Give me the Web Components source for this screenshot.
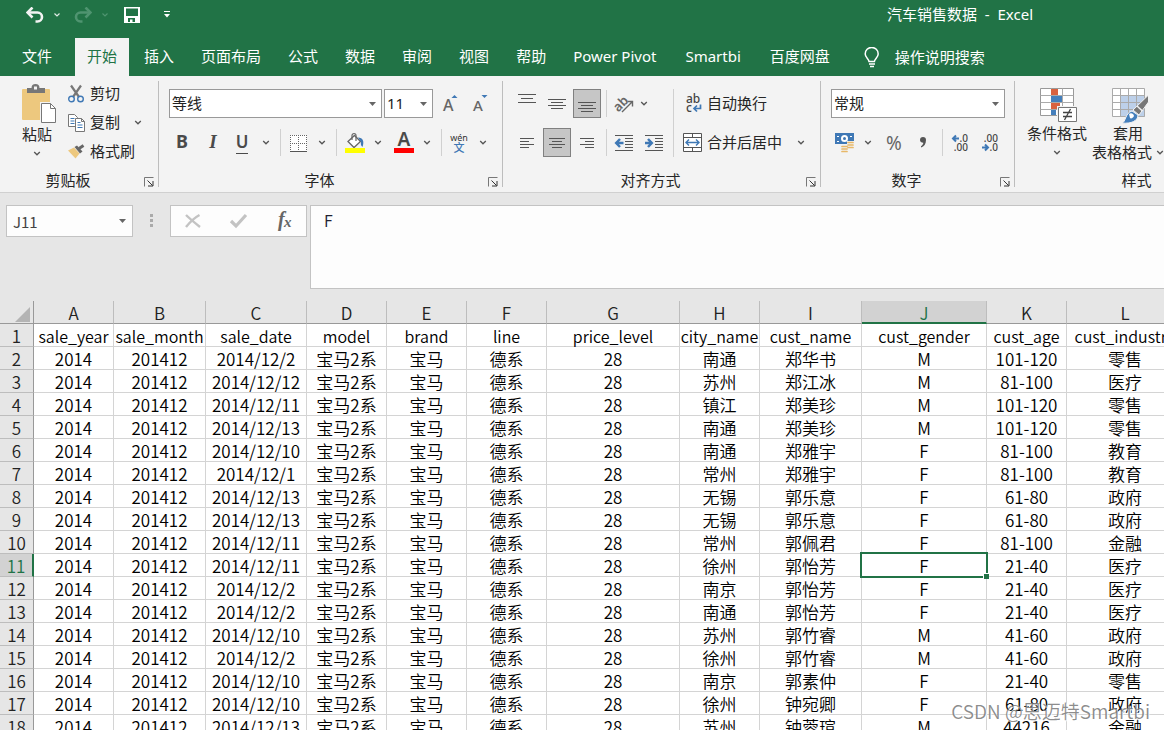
<!DOCTYPE html>
<html lang="zh-CN">
<head>
<meta charset="utf-8">
<title>汽车销售数据 - Excel</title>
<style>
  html, body { margin: 0; height: 100%; overflow: hidden; }
  body { font: 15px/20px "Noto Sans", "Noto Sans CJK SC", sans-serif; color: #262626; }
</style>
</head>
<body>
<excel-app></excel-app>
<script>
const ICONS = {
  undo: [18, 16, '<path d="M2 5.500H11.500a4.500 4.500 0 0 1 0 9H9.500" fill="none" stroke="#f3f3f3" stroke-width="2.600"/><path d="M6.500 0.500 1.500 5.500l5 5" fill="none" stroke="#f3f3f3" stroke-width="2.600"/>'],
  redo: [18, 16, '<path d="M16 5.500H6.500a4.500 4.500 0 0 0 0 9H8.500" fill="none" stroke="#4f9470" stroke-width="2.600"/><path d="M11.500 0.500l5 5-5 5" fill="none" stroke="#4f9470" stroke-width="2.600"/>'],
  save: [16, 16, '<path fill="#fff" fill-rule="evenodd" d="M0 0h16v16H0zM2 1.500v7.500h12V1.500zM4 11v4h2v-2.500h2.500V15H11v-4z"/>'],
  more: [6, 7, '<path d="M0 0.500h6" stroke="#fff"/><path d="M0 3h6L3 6.500z" fill="#fff"/>'],
  chevW: [6, 4, '<path d="M0.500 0.500 3 3 5.500 0.500" fill="none" stroke="#dfeae4" stroke-width="1.200"/>'],
  chevG: [6, 4, '<path d="M0.500 0.500 3 3 5.500 0.500" fill="none" stroke="#4f9470" stroke-width="1.200"/>'],
  chev: [8, 5, '<path d="M1.200 1 4 3.800 6.800 1" fill="none" stroke="#555" stroke-width="1.300"/>'],
  bulb: [16, 21, '<path d="M5 14.500c0-2.500-3.800-4-3.800-7.600a6.500 6.500 0 0 1 13 0c0 3.600-3.800 5.100-3.800 7.600z" fill="none" stroke="#fff" stroke-width="1.500"/><path d="M5 17h6M6 19.500h4" stroke="#fff" stroke-width="1.500"/>'],
  paste: [38, 38, '<g transform="translate(4)"><rect y="4" width="28" height="31" rx="1" fill="#edc87e"/><path d="M5 3h4.500a4 4 0 0 1 8 0H23v5H5z" fill="#777"/><rect x="12" y="1.500" width="3" height="3" fill="#f3f3f3"/><path d="M19.500 18.500h9l5 5v14h-14z" fill="#fff" stroke="#f3f3f3" stroke-width="3"/><path d="M19.500 18.500h9l5 5v14h-14z" fill="#fff" stroke="#777"/><path d="M28.500 18.500v5h5" fill="none" stroke="#777"/></g>'],
  cut: [16, 18, '<path d="M3 0.500 11 12M13 0.500 5 12" stroke="#777" stroke-width="2.200"/><circle cx="3.500" cy="14" r="2.800" fill="none" stroke="#3f78b5" stroke-width="1.400"/><circle cx="12.500" cy="14" r="2.800" fill="none" stroke="#3f78b5" stroke-width="1.400"/>'],
  copy: [17, 18, '<path d="M0.500 0.500h6l3 3v9h-9z" fill="#fff" stroke="#777"/><path d="M2.500 4.500h4M2.500 7h4M2.500 9.500h4" stroke="#3f78b5"/><path d="M7.500 4.500h6l3 3v10h-9z" fill="#fff" stroke="#777"/><path d="M13.500 4.500v3h3" fill="none" stroke="#777"/><path d="M9.500 8.500h3M9.500 11h5M9.500 13.500h5" stroke="#3f78b5"/>'],
  brush: [17, 15, '<path d="M0 6.500 6 3.500l5.500 6L7.500 14.500z" fill="#edc87e"/><path d="M6.500 3 9 1.500l5.500 6-2.500 2z" fill="#666"/><path d="M11 4.500 15.500 1.500" stroke="#666" stroke-width="3"/>'],
  launch: [10, 10, '<path d="M0.500 9.500v-9h9" fill="none" stroke="#777"/><path d="M3.500 3.500 8.500 8.500M9 4v5H4" fill="none" stroke="#333"/>'],
  tri: [7, 4, '<path d="M0 0h7L3.500 4z" fill="#666"/>'],
  grow: [16, 18, '<text x="0" y="16" font-family="Noto Sans" font-size="16" font-weight="500" fill="#666">A</text><path d="M8.500 3 11.500 0 14.500 3z" fill="#3f78b5"/>'],
  shrink: [16, 18, '<text x="0" y="16" font-family="Noto Sans" font-size="15" font-weight="500" fill="#666">A</text><path d="M8.500 0 11.500 3 14.500 0z" fill="#3f78b5"/>'],
  border: [17, 18, '<path d="M0 1h17v16H0z" fill="#fff"/><path d="M0 1.500h17M0 9.500h17M0.500 1v16M8.500 1v16M16.500 1v16" stroke="#666" stroke-dasharray="1 1" fill="none"/><path d="M0 17.500h17" stroke="#555"/>'],
  fill: [20, 20, '<path d="M3 8.500 9.500 2.500l6 6-6.500 6z" fill="#fff" stroke="#666" stroke-width="1.300"/><path d="M7 7V2.500a2 2 0 0 1 4 0V8" fill="none" stroke="#666" stroke-width="1.200"/><path d="M13 4.500c5 0 6.500 4 4.500 9.500-1.500-1-2-3-1.500-5z" fill="#3f78b5"/><rect y="15" width="20" height="5" fill="#ff0"/>'],
  color: [20, 21, '<text x="10" y="14" text-anchor="middle" font-family="Noto Sans" font-size="19" font-weight="600" fill="#4a4a4a">A</text><rect y="16" width="20" height="5" fill="#f00"/>'],
  wen: [18, 20, '<text x="9" y="8" text-anchor="middle" font-family="Noto Sans" font-size="9" fill="#333">wén</text><text x="9" y="19" text-anchor="middle" font-family="Noto Sans CJK SC" font-size="11" font-weight="500" fill="#3f78b5">文</text>'],
  top: [18, 20, '<path d="M0 0.500h18M3 4.500h12M0 8.500h18" stroke="#555"/>'],
  mid: [18, 20, '<path d="M0 5.500h18M3 8.500h12M0 11.500h18M3 14.500h12" stroke="#555"/>'],
  bot: [18, 20, '<path d="M0 8.500h18M3 11.500h12M0 14.500h18M3 17.500h12" stroke="#555"/>'],
  left: [14, 18, '<path d="M0 4.500h14M0 7.500h9M0 10.500h14M0 13.500h9" stroke="#555"/>'],
  center: [16, 18, '<path d="M0 4.500h16M3 7.500h10M0 10.500h16M3 13.500h10" stroke="#555"/>'],
  right: [14, 18, '<path d="M0 4.500h14M5 7.500h9M0 10.500h14M5 13.500h9" stroke="#555"/>'],
  orient: [20, 18, '<text x="-1" y="13" transform="rotate(-45 7 9)" font-family="Noto Sans" font-size="13" font-weight="600" fill="#666">ab</text><path d="M8 17 18 7M13.500 6.500H18.500V11.500" fill="none" stroke="#666" stroke-width="1.400"/>'],
  outdent: [18, 18, '<path d="M0 1.500h18M10 4.500h8M10 7.500h8M10 10.500h8M10 13.500h8M0 16.500h18" stroke="#555"/><path d="M1.500 9H8.500M5 5 1.200 9 5 13" fill="none" stroke="#3f78b5" stroke-width="2.500"/>'],
  indent: [18, 18, '<path d="M0 1.500h18M10 4.500h8M10 7.500h8M10 10.500h8M10 13.500h8M0 16.500h18" stroke="#555"/><path d="M0 9H6.500M3 5 6.800 9 3 13" fill="none" stroke="#3f78b5" stroke-width="2.500"/>'],
  wrap: [18, 19, '<text x="2" y="9" font-family="Noto Sans" font-size="12" font-weight="500" fill="#444">ab</text><text x="2" y="18" font-family="Noto Sans" font-size="12" font-weight="500" fill="#444">c</text><path d="M16.500 10.500v4H10.500M13 11.500 10 14.500 13 17.500" fill="none" stroke="#3f78b5" stroke-width="1.700"/>'],
  merge: [19, 19, '<path d="M0.500 0.500h18v18h-18zM0.500 4.500h18M0.500 14.500h18M9.500 0.500v4M9.500 14.500v4" fill="#fff" stroke="#555"/><path d="M2.500 9.500h14M6 6.500 3 9.500 6 12.500M13 6.500 16 9.500 13 12.500" fill="none" stroke="#3f78b5" stroke-width="1.400"/>'],
  money: [19, 19, '<rect width="19" height="11" fill="#3f78b5"/><path d="M2 3.500h2M15 3.500h2M2 8.500h2" stroke="#fff"/><circle cx="9.500" cy="5.500" r="3.500" fill="#fff"/><circle cx="9.500" cy="5.500" r="1.500" fill="#3f78b5"/><path d="M12 8h7v9h-4v2H6v-7h6z" fill="#f3f3f3"/><path d="M13 9.500h5M13 12h5M13 14.500h5M7 13.500h5M7 16h5M7 18.500h5" stroke="#e8b868" stroke-width="1.700" stroke-linecap="round"/>'],
  percent: [18, 18, '<text x="9" y="16" text-anchor="middle" font-family="Noto Sans" font-size="19" fill="#666">%</text>'],
  comma: [8, 20, '<path d="M1 7a3 3 0 0 1 6 0c0 4-2 6.500-5 7.500v-1.200c1.500-1 2.300-2.200 2.300-3.500C2.500 9.800 1 8.700 1 7z" fill="#555"/>'],
  decInc: [17, 18, '<path d="M1 4.500h6M4 1.500 1 4.500 4 7.500" fill="none" stroke="#3f78b5" stroke-width="2"/><text x="16" y="8" text-anchor="end" font-family="Noto Sans" font-size="10" font-weight="500" fill="#444">.0</text><text x="16" y="17" text-anchor="end" font-family="Noto Sans" font-size="10" font-weight="500" fill="#444">.00</text>'],
  decDec: [17, 18, '<path d="M0 13.500h6M3 10.500 6 13.500 3 16.500" fill="none" stroke="#3f78b5" stroke-width="2"/><text x="16" y="8" text-anchor="end" font-family="Noto Sans" font-size="10" font-weight="500" fill="#444">.00</text><text x="16" y="17" text-anchor="end" font-family="Noto Sans" font-size="10" font-weight="500" fill="#444">.0</text>'],
  cond: [42, 36, '<g transform="translate(4)"><path d="M0.500 0.500h33v27h-33z" fill="#fff" stroke="#999"/><path d="M0.500 7.500h33M0.500 14.500h33M0.500 21.500h33M11.500 0.500v27M22.500 0.500v27" stroke="#aaa"/><path d="M11 1h7v6h-7zM11 15h9v6h-9z" fill="#d9623f"/><path d="M11 8h11v6H11zM11 22h5v5h-5z" fill="#447fbc"/><path d="M17 18h20v17H17z" fill="#f3f3f3"/><path d="M18.500 19.500h18v14h-18z" fill="#fff" stroke="#777"/><path d="M23 24.500h9M23 28.500h9M30.500 21 24.500 32" stroke="#444" stroke-width="1.300"/></g>'],
  tablefmt: [44, 36, '<g transform="translate(6)"><path d="M0.500 0.500h32v28h-32z" fill="#fff"/><path d="M9 8h24v21H9z" fill="#bdd0e9"/><path d="M0.500 0.500h32v28h-32zM0.500 7.500h32M0.500 14.500h32M0.500 21.500h32M8.500 0.500v28M16.500 0.500v28M24.500 0.500v28" fill="none" stroke="#aaa"/><path d="M10 35c4-1 3-10 10-12l6 4c0 6-7 9-16 8z" fill="#447fbc" stroke="#f3f3f3"/><path d="M17 26a3 3 0 0 1 5 2c-1 2-3 3-4 2z" fill="#fff"/><path d="M21 22 36.500 7v7L27 27z" fill="#777" stroke="#f3f3f3"/><path d="M25 18l5.500 5" stroke="#f3f3f3" stroke-width="1.500"/></g>'],
  dots: [3, 13, '<path d="M0 0h3v3H0zM0 5h3v3H0zM0 10h3v3H0z" fill="#aaa"/>'],
  cancel: [16, 14, '<path d="M1 1c4 4 9 8 14 12M14.500 1C9 4 5 8 1 13" fill="none" stroke="#c3c3c3" stroke-width="2.400"/>'],
  ok: [17, 14, '<path d="M1 7l5 5L16 1" fill="none" stroke="#c3c3c3" stroke-width="3.200"/>'],
  fx: [18, 20, '<text x="3" y="15" font-family="Liberation Serif" font-size="20" font-style="italic" font-weight="700" fill="#666">f</text><text x="9" y="16" font-family="Liberation Serif" font-size="15" font-style="italic" font-weight="700" fill="#666">x</text>'],
  corner: [15, 15, '<path d="M15 0v15H0z" fill="#b4b4b4"/>']
};
const svg = n => {
  const [w, h, body] = ICONS[n];
  return `<svg width="${w}" height="${h}" viewBox="0 0 ${w} ${h}" aria-hidden="true">${body}</svg>`;
};
const define = (tag, render) => customElements.define(tag, class extends HTMLElement {
  connectedCallback() {
    if (!this.shadowRoot) this.attachShadow({ mode: 'open' }).innerHTML = render(this);
  }
});

/* One command: icon, optional slotted caption, optional drop arrow. */
define('tool-button', el => {
  const icon = el.getAttribute('icon'), label = el.getAttribute('label');
  return `<style>
    :host { display: flex; justify-content: center; align-items: center; }
    button { all: unset; box-sizing: border-box; display: flex; align-items: center; gap: 5px; height: 29px; justify-content: center; white-space: nowrap; }
    svg { display: block; flex: none; overflow: visible; }
    .ic { display: flex; justify-content: center; min-width: var(--icon-box, 0); }
    .cap { margin-bottom: 2px; }
    :host([pressed]) button { width: 28px; background: #c6c6c6; border: 1px solid #808080; }
    :host([big]) { align-items: flex-start; }
    :host([big]) button { flex-direction: column; height: auto; gap: 0; justify-content: flex-start; line-height: 19px; text-align: center; }
    :host([big]) .ic { height: var(--big-icon, 40px); align-items: flex-start; }
    :host([big]) .cap { margin: 0; }
    :host([big]) .drop { height: 19px; display: flex; align-items: center; }
    :host([start]) { justify-content: flex-start; }
  </style><button type="button" ${label ? `aria-label="${label}"` : ''} ${el.hasAttribute('pressed') ? 'aria-pressed="true"' : ''}>${icon ? `<span class="ic">${svg(icon)}</span>` : ''}${el.textContent.trim() ? '<span class="cap"><slot></slot></span>' : ''}${el.hasAttribute('drop') ? `<span class="drop">${svg('chev')}</span>` : ''}</button>`;
});

define('drop-arrow', () => `<style>:host{display:inline-flex;align-items:center;justify-content:center}svg{display:block}</style>${svg('chev')}`);
define('tool-rule', () => `<style>:host{display:block;width:1px;height:27px;background:#d0d0d0;align-self:center;justify-self:center}</style>`);

define('drop-box', el => `<style>
    :host { display: block; position: relative; }
    select { appearance: none; box-sizing: border-box; width: 100%; height: 29px; padding: 0 2px 1px; border: 1px solid #999; border-radius: 0; background: #fff; font: inherit; color: #222; display: block; }
    svg { position: absolute; right: 6px; top: 13px; pointer-events: none; }
  </style><select aria-label="${el.getAttribute('label')}"><option>${el.getAttribute('value')}</option></select>${svg('tri')}`);

/* Ribbon group: commands in the slot, a caption underneath. */
define('ribbon-group', el => `<style>
    :host { display: flex; flex-direction: column; flex: none; box-sizing: border-box; height: 106px; border-right: 1px solid #bdbdbd; }
    .body { flex: 1; min-height: 0; }
    footer { display: flex; align-items: center; height: 14px; }
    footer span { flex: 1; text-align: center; padding-right: var(--cap-shift, 8px); }
    footer button { all: unset; width: 10px; margin-right: 4px; }
    svg { display: block; margin-top: 3px; }
  </style><div class="body"><slot></slot></div>
  <footer><span>${el.getAttribute('caption')}</span>${el.hasAttribute('launcher') ? `<button type="button" aria-label="${el.getAttribute('caption')}设置">${svg('launch')}</button>` : ''}</footer>`);

define('title-bar', () => `<style>
    :host { display: flex; align-items: center; height: 28px; padding-top: 1px; box-sizing: border-box; background: #217346; color: #fff; }
    nav { display: flex; align-items: center; padding-left: 26px; flex: 1; }
    button { all: unset; display: flex; align-items: center; justify-content: center; height: 20px; }
    svg { display: block; }
    .s { width: 18px; } .m { width: 26px; } .l { width: 35px; }
    h1 { margin: -2px 131px 0 0; font: inherit; white-space: pre; }
  </style>
  <nav aria-label="快速访问工具栏"><button class="s" aria-label="撤消">${svg('undo')}</button><button class="m" aria-label="撤消列表">${svg('chevW')}</button><button class="m" aria-label="恢复">${svg('redo')}</button><button class="s" aria-label="恢复列表">${svg('chevG')}</button><button class="l" aria-label="保存">${svg('save')}</button><button class="l" aria-label="自定义">${svg('more')}</button></nav>
  <h1>汽车销售数据  -  Excel</h1>`);

define('ribbon-tabs', () => `<style>
    :host { display: flex; align-items: stretch; gap: 3px; height: 48px; padding: 10px 0 0 10px; box-sizing: border-box; background: #217346; color: #fff; }
    a { display: flex; align-items: center; padding: 0 12px 3px; color: inherit; text-decoration: none; white-space: nowrap; }
    a.on { background: #f3f3f3; color: #217346; }
    a.file { margin-right: 8px; }
    a.en { padding-right: 14px; }
    a.tell { padding: 0 0 0 19px; gap: 15px; }
  </style>${['文件', '开始', '插入', '页面布局', '公式', '数据', '审阅', '视图', '帮助', 'Power Pivot', 'Smartbi', '百度网盘'].map(t => `<a href="#" ${t === '开始' ? 'class="on" aria-current="page"' : t === '文件' ? 'class="file"' : /^\w/.test(t) ? 'class="en"' : ''}>${t}</a>`).join('')}<a href="#" class="tell">${svg('bulb')}操作说明搜索</a>`);

define('excel-ribbon', () => `<style>
    :host { display: flex; align-items: flex-start; box-sizing: border-box; height: 117px; padding-top: 5px; background: #f3f3f3; border-bottom: 1px solid #d0d0d0; overflow: hidden; }
    .clip { width: 159px; } .font { width: 344px; } .align { width: 318px; } .num { width: 194px; } .style { width: 243px; border: 0; --cap-shift: 0px; --big-icon: 36px; }
    .row { display: grid; height: 29px; align-items: center; }
    .clip .in { display: grid; grid-template-columns: 50px 90px; column-gap: 5px; padding: 4px 0 0 12px; --icon-box: 18px; }
    .cmds { display: grid; grid-template-rows: repeat(3, 29px); margin-top: -6px; }
    .cmds .row { grid-template-columns: 54px 34px; }
    .font .in, .num .in { display: grid; row-gap: 10px; padding-top: 8px; }
    .font .r1 { grid-template-columns: 213px 49px 32px 24px; column-gap: 2px; padding-left: 10px; }
    .font .r2 { grid-template-columns: 30px 32px 26px 22px 6px 30px 18px 10px 28px 18px 34px 12px 16px 20px 28px; padding-left: 8px; }
    .b { font: 700 18px/20px "Noto Sans", sans-serif; color: #4a4a4a; }
    .i { font: italic 700 19px/20px "Liberation Serif", serif; color: #4a4a4a; }
    .u { font: 600 17px/18px "Noto Sans", sans-serif; color: #4a4a4a; border-bottom: 1px solid #4a4a4a; }
    .align .in { display: flex; padding: 8px 0 0 9px; }
    .align .l { display: grid; row-gap: 10px; }
    .align .l .row { grid-template-columns: 30px 30px 30px 8px 28px 32px; }
    .align .l drop-arrow { justify-content: flex-start; padding-left: 2px; }
    .tall { height: 68px; margin: 0 9px 0 3px; }
    .align .r { display: grid; row-gap: 10px; --icon-box: 19px; }
    .align .r .row { grid-template-columns: 108px 20px; }
    .num .r1 { grid-template-columns: 174px; padding-left: 10px; }
    .num .r2 { grid-template-columns: 26px 22px 30px 28px 10px 26px 34px; padding-left: 10px; }
    .style .in { display: flex; gap: 5px; padding: 7px 0 0 12px; }
    .fmt { display: inline-flex; gap: 4px; }
  </style>
  <ribbon-group class="clip" caption="剪贴板" launcher><div class="in">
    <tool-button icon="paste" big drop>粘贴</tool-button>
    <div class="cmds"><tool-button start icon="cut">剪切</tool-button><span class="row"><tool-button start icon="copy">复制</tool-button><drop-arrow></drop-arrow></span><tool-button start icon="brush">格式刷</tool-button></div>
  </div></ribbon-group>
  <ribbon-group class="font" caption="字体" launcher><div class="in">
    <div class="row r1"><drop-box label="字体" value="等线"></drop-box><drop-box label="字号" value="11"></drop-box><tool-button icon="grow" label="增大字号"></tool-button><tool-button icon="shrink" label="减小字号"></tool-button></div>
    <div class="row r2"><tool-button label="加粗"><span class="b">B</span></tool-button><tool-button label="倾斜"><span class="i">I</span></tool-button><tool-button label="下划线"><span class="u">U</span></tool-button><drop-arrow></drop-arrow><tool-rule></tool-rule><tool-button icon="border" label="边框"></tool-button><drop-arrow></drop-arrow><tool-rule></tool-rule><tool-button icon="fill" label="填充颜色"></tool-button><drop-arrow></drop-arrow><tool-button icon="color" label="字体颜色"></tool-button><drop-arrow></drop-arrow><tool-rule></tool-rule><tool-button icon="wen" label="拼音指南"></tool-button><drop-arrow></drop-arrow></div>
  </div></ribbon-group>
  <ribbon-group class="align" caption="对齐方式" launcher><div class="in">
    <div class="l">
      <div class="row"><tool-button icon="top" label="顶端对齐"></tool-button><tool-button icon="mid" label="垂直居中"></tool-button><tool-button pressed icon="bot" label="底端对齐"></tool-button><tool-rule></tool-rule><tool-button icon="orient" label="方向"></tool-button><drop-arrow></drop-arrow></div>
      <div class="row"><tool-button icon="left" label="左对齐"></tool-button><tool-button pressed icon="center" label="居中"></tool-button><tool-button icon="right" label="右对齐"></tool-button><tool-rule></tool-rule><tool-button icon="outdent" label="减少缩进量"></tool-button><tool-button icon="indent" label="增加缩进量"></tool-button></div>
    </div>
    <tool-rule class="tall"></tool-rule>
    <div class="r">
      <div class="row"><tool-button start icon="wrap">自动换行</tool-button></div>
      <div class="row"><tool-button start icon="merge">合并后居中</tool-button><drop-arrow></drop-arrow></div>
    </div>
  </div></ribbon-group>
  <ribbon-group class="num" caption="数字" launcher><div class="in">
    <div class="row r1"><drop-box label="数字格式" value="常规"></drop-box></div>
    <div class="row r2"><tool-button icon="money" label="会计数字格式"></tool-button><drop-arrow></drop-arrow><tool-button icon="percent" label="百分比样式"></tool-button><tool-button icon="comma" label="千位分隔样式"></tool-button><tool-rule></tool-rule><tool-button icon="decInc" label="增加小数位数"></tool-button><tool-button icon="decDec" label="减少小数位数"></tool-button></div>
  </div></ribbon-group>
  <ribbon-group class="style" caption="样式"><div class="in">
    <tool-button big drop icon="cond">条件格式</tool-button>
    <tool-button big icon="tablefmt"><span>套用<br><span class="fmt">表格格式 <drop-arrow></drop-arrow></span></span></tool-button>
  </div></ribbon-group>`);

define('formula-bar', () => `<style>
    :host { display: flex; align-items: flex-start; box-sizing: border-box; height: 108px; padding: 12px 0 0 6px; background: #e6e6e6; }
    .name { position: relative; width: 127px; }
    input { box-sizing: border-box; width: 100%; height: 32px; display: block; padding: 0 6px; border: 1px solid #c3c3c3; background: #fdfdfd; font: 15px/20px "Noto Sans CJK SC", sans-serif; color: #444; }
    .name svg { position: absolute; right: 7px; top: 14px; }
    .dots { width: 37px; display: flex; justify-content: center; padding-top: 9px; }
    .btns { box-sizing: border-box; width: 137px; height: 32px; display: grid; grid-template-columns: 44px 46px 45px; border: 1px solid #c3c3c3; background: #fdfdfd; margin-right: 3px; }
    button { all: unset; display: flex; align-items: center; justify-content: center; }
    button svg { overflow: visible; }
    textarea { flex: 1; box-sizing: border-box; height: 84px; margin: 0; padding: 3px 13px; border: 1px solid #c3c3c3; border-right: 0; background: #fdfdfd; resize: none; font: 350 16px/22px "Noto Sans CJK SC", sans-serif; color: #223; }
  </style>
  <div class="name"><input aria-label="名称框" value="J11">${svg('tri')}</div><div class="dots">${svg('dots')}</div>
  <div class="btns"><button type="button" aria-label="取消">${svg('cancel')}</button><button type="button" aria-label="输入">${svg('ok')}</button><button type="button" aria-label="插入函数">${svg('fx')}</button></div>
  <textarea aria-label="编辑栏">F</textarea>`);

const COLS = [['A', 80], ['B', 92], ['C', 101], ['D', 80], ['E', 80], ['F', 80], ['G', 133], ['H', 80], ['I', 102], ['J', 125], ['K', 80], ['L', 117]];
const HEAD = ['sale_year', 'sale_month', 'sale_date', 'model', 'brand', 'line', 'price_level', 'city_name', 'cust_name', 'cust_gender', 'cust_age', 'cust_industry'];
const DATA = [
  ['2014/12/2', '南通', '郑华书', 'M', '101-120', '零售'],
  ['2014/12/12', '苏州', '郑江冰', 'M', '81-100', '医疗'],
  ['2014/12/11', '镇江', '郑美珍', 'M', '101-120', '零售'],
  ['2014/12/13', '南通', '郑美珍', 'M', '101-120', '零售'],
  ['2014/12/10', '南通', '郑雅宇', 'F', '81-100', '教育'],
  ['2014/12/1', '常州', '郑雅宇', 'F', '81-100', '教育'],
  ['2014/12/13', '无锡', '郭乐意', 'F', '61-80', '政府'],
  ['2014/12/13', '无锡', '郭乐意', 'F', '61-80', '政府'],
  ['2014/12/11', '常州', '郭佩君', 'F', '81-100', '金融'],
  ['2014/12/11', '徐州', '郭怡芳', 'F', '21-40', '医疗'],
  ['2014/12/2', '南京', '郭怡芳', 'F', '21-40', '医疗'],
  ['2014/12/2', '南通', '郭怡芳', 'F', '21-40', '医疗'],
  ['2014/12/10', '苏州', '郭竹睿', 'M', '41-60', '政府'],
  ['2014/12/2', '徐州', '郭竹睿', 'M', '41-60', '政府'],
  ['2014/12/10', '南京', '郭素仲', 'F', '21-40', '零售'],
  ['2014/12/10', '徐州', '钟宛卿', 'F', '61-80', '政府'],
  ['2014/12/13', '苏州', '钟蓉瑄', 'M', '44216', '金融']
].map(([d, city, name, g, age, ind]) => ['2014', '201412', d, '宝马2系', '宝马', '德系', '28', city, name, g, age, ind]);

define('sheet-grid', () => `<style>
    :host { display: block; background: #fff; color: #000; font: 350 17px/20px "Noto Sans CJK SC", sans-serif; }
    table { table-layout: fixed; border-collapse: separate; border-spacing: 0; width: 1184px; }
    th, td { box-sizing: border-box; height: 23px; padding: 2px 0 0; font-weight: inherit; text-align: center; white-space: nowrap; border-right: 1px solid #d4d4d4; border-bottom: 1px solid #d4d4d4; }
    th { background: #e6e6e6; color: #222; border-color: #bdbdbd; }
    thead th { border-bottom-color: #999; }
    tbody th, thead th.corner { border-right-color: #999; }
    .names td { font-size: 16px; }
    th.on { background: #d2d2d2; color: #217346; }
    thead th.on { border-bottom: 2px solid #217346; line-height: 19px; }
    tbody th.on { border-right: 2px solid #217346; }
    .corner svg { display: block; margin: 2px 0 0 15px; }
    td.sel { position: relative; }
    td.sel::before { content: ""; position: absolute; inset: -2px; border: 2px solid #217346; }
    td.sel::after { content: ""; position: absolute; right: -3px; bottom: -3px; width: 5px; height: 5px; background: #217346; border: solid #fff; border-width: 1px 0 0 1px; }
  </style>
  <table><colgroup><col style="width:34px">${COLS.map(c => `<col style="width:${c[1]}px">`).join('')}</colgroup>
  <thead><tr><th class="corner">${svg('corner')}</th>${COLS.map(c => `<th scope="col"${c[0] === 'J' ? ' class="on"' : ''}>${c[0]}</th>`).join('')}</tr></thead>
  <tbody>${[HEAD, ...DATA].map((r, i) => `<tr${i ? '' : ' class="names"'}><th scope="row"${i === 10 ? ' class="on"' : ''}>${i + 1}</th>${r.map((v, j) => `<td${i === 10 && j === 9 ? ' class="sel"' : ''}>${v}</td>`).join('')}</tr>`).join('')}</tbody></table>`);

define('excel-app', () => `<style>
    :host { position: relative; display: flex; flex-direction: column; height: 100vh; overflow: hidden; }
    title-bar, ribbon-tabs, excel-ribbon, formula-bar { flex: none; }
    sheet-grid { flex: 1; min-height: 0; }
    .mark { position: absolute; right: 14px; bottom: 5px; font: 350 19px/28px "Noto Sans CJK SC", sans-serif; color: rgba(120,120,120,.85); text-shadow: 1px 1px 1px #fff; }
  </style><title-bar></title-bar><ribbon-tabs></ribbon-tabs><excel-ribbon></excel-ribbon><formula-bar></formula-bar><sheet-grid></sheet-grid><div class="mark">CSDN @思迈特Smartbi</div>`);
</script>
</body>
</html>
